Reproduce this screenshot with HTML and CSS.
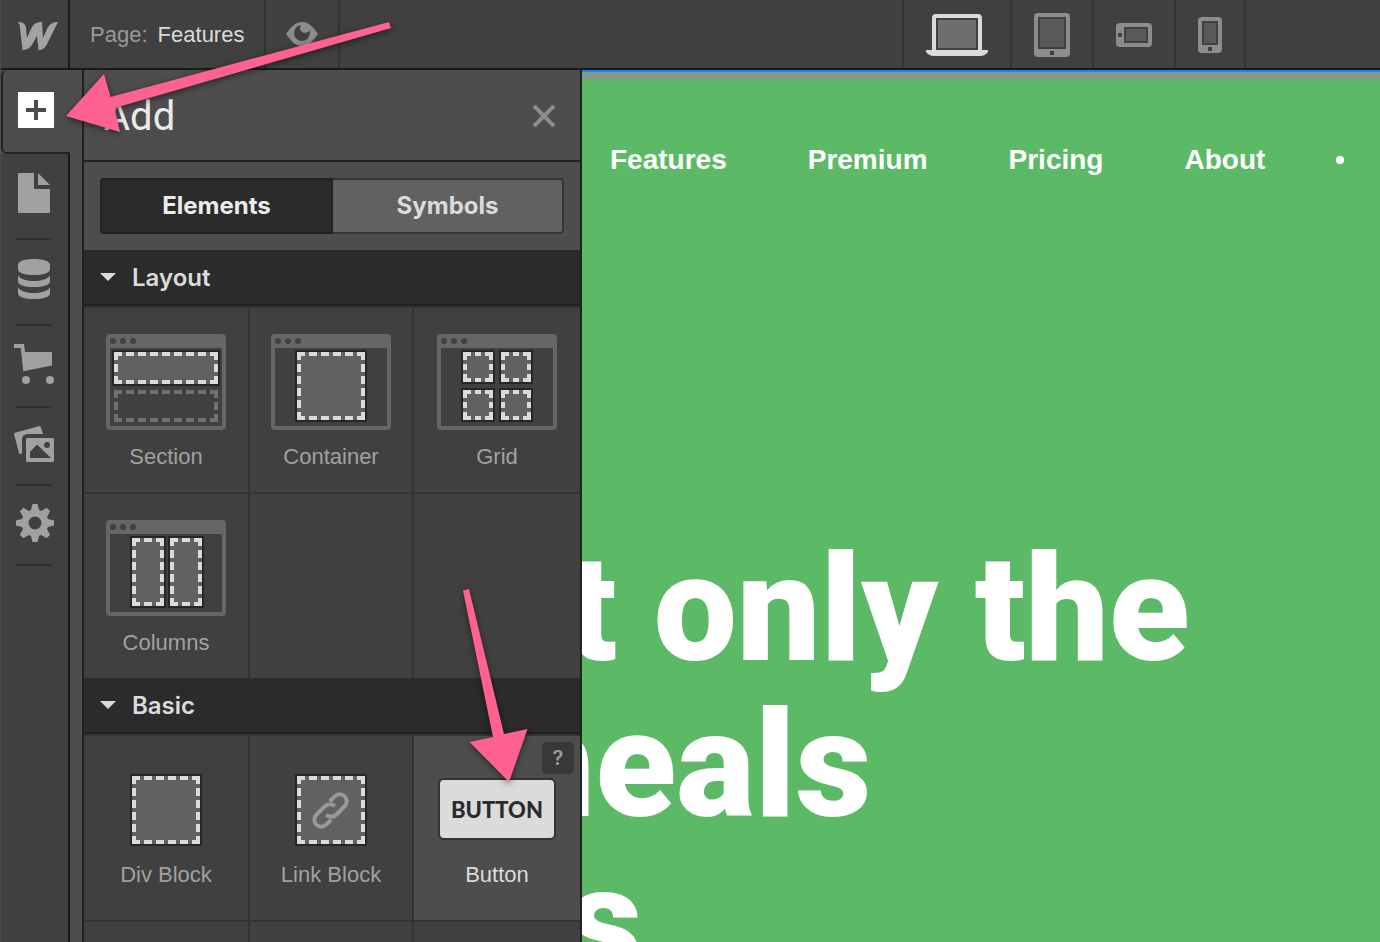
FILE: index.html
```html
<!DOCTYPE html>
<html lang="en">
<head>
    <meta charset="UTF-8">
    <meta name="viewport" content="width=device-width, initial-scale=1.0">
    <title>Designer - Features</title>
    <link rel="stylesheet" href="styles.css">
</head>
<body>
    <div class="app">
        <header class="topbar">
            <a class="logo" href="#" aria-label="Dashboard">
                <svg width="40" height="28" viewBox="0 0 40 28"><path fill="#a3a3a3" d="M0 0C5 0 7.500 2 8 6L9 16L13 7C15 2.500 18 0 24 0L25 16L28.500 8C31 2.500 34 0 40 0L30 20C27.500 25.500 25.500 28 20.500 28L19 14L15 21C12.500 26 9 28 4.500 28L2 6C1.800 3 1.500 1.500 0 0Z"/></svg>
            </a>
            <button class="page-switch" type="button"><span class="page-label">Page:</span> Features</button>
            <button class="preview" type="button" aria-label="Preview">
                <svg width="32" height="24" viewBox="0 0 32 24"><path fill="#8c8c8c" d="M0 12C5 5 9 0 16 0s11 5 16 12c-5 7-9 12-16 12S5 19 0 12z"/><circle cx="16" cy="11" r="8" fill="#404040"/><circle cx="19" cy="6" r="5" fill="#8c8c8c"/></svg>
            </button>
            <div class="devices">
                <button class="device device-desktop" type="button" aria-label="Desktop">
                    <svg width="62" height="42" viewBox="0 0 62 42"><path fill="#dbdbdb" d="M6 36V4q0-4 4-4h42q4 0 4 4v32h6v2q-3 4-8 4H8q-5 0-8-4v-2z"/><path fill="#404040" d="M10 4h42v32H10z"/><path fill="#6e6e6e" d="M12 6h38v28H12z"/></svg>
                </button>
                <button class="device" type="button" aria-label="Tablet">
                    <svg width="36" height="44" viewBox="0 0 36 44"><rect width="36" height="44" rx="4" fill="#8c8c8c"/><path fill="#404040" d="M4 4h28v32H4zM16 38h4v4h-4z"/><path fill="#595959" d="M6 6h24v28H6z"/></svg>
                </button>
                <button class="device" type="button" aria-label="Phone landscape">
                    <svg width="36" height="24" viewBox="0 0 36 24"><rect width="36" height="24" rx="4" fill="#8c8c8c"/><path fill="#404040" d="M8 4h24v16H8zM2 10h4v4H2z"/><path fill="#595959" d="M10 6h20v12H10z"/></svg>
                </button>
                <button class="device device-phone" type="button" aria-label="Phone portrait">
                    <svg width="24" height="36" viewBox="0 0 24 36"><rect width="24" height="36" rx="4" fill="#8c8c8c"/><path fill="#404040" d="M4 4h16v24H4zM10 30h4v4h-4z"/><path fill="#595959" d="M6 6h12v20H6z"/></svg>
                </button>
            </div>
        </header>

        <main class="workspace">
            <nav class="rail">
                <button class="rail-active" type="button" aria-label="Add">
                    <svg width="36" height="36" viewBox="0 0 36 36"><rect width="36" height="36" rx="1" fill="#fff"/><path fill="#4d4d4d" d="M16 8h4v8h8v4h-8v8h-4v-8H8v-4h8z"/></svg>
                </button>
                <div class="rail-list">
                    <button class="rail-item rail-item-tall" type="button" aria-label="Pages">
                        <svg width="40" height="40" viewBox="0 0 40 40"><path d="M5 0h15v16h16v23q0 1-1 1H5q-1 0-1-1V1q0-1 1-1zM24 0l12 12H24z"/></svg>
                    </button>
                    <hr>
                    <button class="rail-item rail-item-tall" type="button" aria-label="Collections">
                        <svg width="40" height="40" viewBox="0 0 40 40"><path d="M4 6c0-4 7-6 16-6s16 2 16 6v4c0 4-7 6-16 6S4 14 4 10zM4 16.500c3 4 9 5.500 16 5.500s13-1.500 16-5.500V22c0 4-7 6-16 6S4 26 4 22zM4 28.500c3 4 9 5.500 16 5.500s13-1.500 16-5.500V34c0 4-7 6-16 6S4 38 4 34z"/></svg>
                    </button>
                    <hr>
                    <button class="rail-item" type="button" aria-label="Ecommerce">
                        <svg width="40" height="40" viewBox="0 0 40 40"><path d="M0 0h10l1 8h27v13.600L9.300 27.300 6.700 4H0z"/><circle cx="12" cy="36" r="4"/><circle cx="36" cy="36" r="4"/></svg>
                    </button>
                    <hr>
                    <button class="rail-item" type="button" aria-label="Assets">
                        <svg width="40" height="36" viewBox="0 0 40 36"><path d="M0 8q0-1 1-1.300L25.500 0q1 0 1.300 1L29 8H14q-6 0-6 6v13l-1.500 1q-1 0-1.500-1z"/><path fill-rule="evenodd" d="M13.500 12h25q1.500 0 1.500 1.500v21q0 1.500-1.500 1.500h-25q-1.500 0-1.500-1.500v-21q0-1.500 1.500-1.500zM16 32h21L23 18.500 16 26zM33 16a3 3 0 1 0 0 6 3 3 0 0 0 0-6z"/></svg>
                    </button>
                    <hr>
                    <button class="rail-item" type="button" aria-label="Settings">
                        <svg width="40" height="38" viewBox="0 0 40 38">
                            <circle class="gear-ring" cx="21" cy="19" r="10"/>
                            <path id="tooth" d="M18.500 0h5l2 8h-9z"/>
                            <use href="#tooth" transform="rotate(45 21 19)"/>
                            <use href="#tooth" transform="rotate(90 21 19)"/>
                            <use href="#tooth" transform="rotate(135 21 19)"/>
                            <use href="#tooth" transform="rotate(180 21 19)"/>
                            <use href="#tooth" transform="rotate(225 21 19)"/>
                            <use href="#tooth" transform="rotate(270 21 19)"/>
                            <use href="#tooth" transform="rotate(315 21 19)"/>
                        </svg>
                    </button>
                    <hr>
                </div>
            </nav>

            <section class="panel">
                <div class="panel-header">
                    <h2>Add</h2>
                    <button class="close" type="button" aria-label="Close">
                        <svg width="24" height="24" viewBox="0 0 24 24"><path d="M2 2l20 20M22 2L2 22" stroke="#8c8c8c" stroke-width="4"/></svg>
                    </button>
                </div>
                <div class="tabs">
                    <button class="tab tab-active" type="button">Elements</button>
                    <button class="tab" type="button">Symbols</button>
                </div>

                <button class="group-title" type="button">
                    <svg width="16" height="8" viewBox="0 0 16 8"><path fill="#dbdbdb" d="M0 0h16L8 8z"/></svg>
                    Layout
                </button>
                <div class="tiles">
                    <button class="tile" type="button">
                        <svg width="120" height="96" viewBox="0 0 120 96">
                            <g id="frame">
                                <rect width="120" height="96" rx="4" fill="#666"/>
                                <path fill="#404040" d="M4 14h112v78H4z"/>
                                <circle cx="7" cy="7" r="3" fill="#404040"/><circle cx="17" cy="7" r="3" fill="#404040"/><circle cx="27" cy="7" r="3" fill="#404040"/>
                            </g>
                            <path class="box" d="M7 17h106v34H7z"/>
                            <path class="dash" d="M8 20h104M8 48h104M10 18v32M110 18v32"/>
                            <path class="dash dash-dim" d="M8 58h104M8 86h104M10 56v32M110 56v32"/>
                        </svg>
                        <span>Section</span>
                    </button>
                    <button class="tile" type="button">
                        <svg width="120" height="96" viewBox="0 0 120 96">
                            <use href="#frame"/>
                            <path class="box" d="M25 17h70v70H25z"/>
                            <path class="dash" d="M26 20h68M26 84h68M28 18v68M92 18v68"/>
                        </svg>
                        <span>Container</span>
                    </button>
                    <button class="tile" type="button">
                        <svg width="120" height="96" viewBox="0 0 120 96">
                            <use href="#frame"/>
                            <g id="cell">
                                <path class="box" d="M25 17h32v32H25z"/>
                                <path class="dash dash-cell" d="M26 20h30M26 46h30M28 18v30M54 18v30"/>
                            </g>
                            <use href="#cell" x="38"/>
                            <use href="#cell" y="38"/>
                            <use href="#cell" x="38" y="38"/>
                        </svg>
                        <span>Grid</span>
                    </button>
                    <button class="tile" type="button">
                        <svg width="120" height="96" viewBox="0 0 120 96">
                            <use href="#frame"/>
                            <g id="column">
                                <path class="box" d="M25 17h34v70H25z"/>
                                <path class="dash" d="M26 20h32M26 84h32M28 18v68M56 18v68"/>
                            </g>
                            <use href="#column" x="38"/>
                        </svg>
                        <span>Columns</span>
                    </button>
                    <div class="tile"></div>
                    <div class="tile"></div>
                </div>

                <button class="group-title" type="button">
                    <svg width="16" height="8" viewBox="0 0 16 8"><path fill="#dbdbdb" d="M0 0h16L8 8z"/></svg>
                    Basic
                </button>
                <div class="tiles tiles-basic">
                    <button class="tile" type="button">
                        <svg width="72" height="72" viewBox="0 0 72 72">
                            <g id="block">
                                <path class="box" d="M1 1h70v70H1z"/>
                                <path class="dash" d="M2 4h68M2 68h68M4 2v68M68 2v68"/>
                            </g>
                        </svg>
                        <span>Div Block</span>
                    </button>
                    <button class="tile" type="button">
                        <svg width="72" height="72" viewBox="0 0 72 72">
                            <use href="#block"/>
                            <g transform="translate(35.500 36.500) rotate(-45)" fill="none" stroke="#999" stroke-width="4">
                                <path id="link" d="M6 -7h7a7 7 0 0 1 0 14H1A7 7 0 0 1 -6 0"/>
                                <use href="#link" transform="rotate(180)"/>
                            </g>
                        </svg>
                        <span>Link Block</span>
                    </button>
                    <div class="tile tile-hover">
                        <button class="help" type="button" aria-label="Help">?</button>
                        <button class="button-art" type="button">BUTTON</button>
                        <span>Button</span>
                    </div>
                    <div class="tile"></div>
                    <div class="tile"></div>
                    <div class="tile"></div>
                </div>
            </section>

            <section class="canvas">
                <nav class="site-nav">
                    <a href="#">Features</a>
                    <a href="#">Premium</a>
                    <a href="#">Pricing</a>
                    <a href="#">About</a>
                    <span class="dot"></span>
                </nav>
                <h1 class="hero">
                    <span>t only the</span>
                    <span class="hero-cut">meals</span>
                    <span>s</span>
                </h1>
            </section>
        </main>

        <svg class="arrows" width="540" height="800" viewBox="0 0 540 800">
            <path d="M66 116L104 74L110.500 97L389 22L391 28L114.500 108L120 132Z"/>
            <path d="M463 590.500L469 589L504 734L527.500 729L509 782L469.500 742L493 737Z"/>
        </svg>
    </div>
</body>
</html>
```
FILE: styles.css
```css
* {
    box-sizing: border-box;
}
body {
    margin: 0;
    overflow: hidden;
    background-color: #404040;
    font-family: "Liberation Sans", Arial, sans-serif;
    font-size: 22px;
    color: #dbdbdb;
}
button {
    margin: 0;
    padding: 0;
    border: 0;
    background: none;
    color: inherit;
    font: inherit;
    cursor: pointer;
}
svg {
    display: block;
    flex-shrink: 0;
}
.app {
    position: relative;
    display: flex;
    flex-direction: column;
    height: 100vh;
    border-left: 1px solid #4d4d4d;
}

/* top bar */
.topbar {
    display: flex;
    flex-shrink: 0;
    height: 70px;
    border-bottom: 2px solid #1a1a1a;
    background-color: #404040;
}
.logo {
    display: flex;
    align-items: center;
    width: 69px;
    padding: 4px 0 0 17px;
    border-right: 2px solid #1a1a1a;
}
.page-switch {
    padding: 2px 20px 0;
    border-right: 2px solid #333;
}
.page-label {
    margin-right: 4px;
    color: #999;
}
.preview {
    display: flex;
    align-items: center;
    justify-content: center;
    width: 74px;
    border-right: 2px solid #333;
}
.devices {
    display: flex;
    margin-left: auto;
    padding-right: 134px;
}
.device {
    display: flex;
    align-items: center;
    justify-content: center;
    width: 82px;
    padding-top: 2px;
    border-left: 2px solid #333;
}
.device-desktop {
    width: 108px;
}
.device-phone {
    width: 72px;
    border-right: 2px solid #333;
}

/* left rail */
.workspace {
    display: flex;
    flex: 1;
    min-height: 0;
}
.rail {
    display: flex;
    flex-direction: column;
    flex-shrink: 0;
    width: 81px;
    background-color: #4d4d4d;
}
.rail-active {
    height: 84px;
    width: 69px;
    padding: 22px 0 0 15px;
    border-left: 2px solid #222;
    border-bottom: 2px solid #222;
    border-radius: 6px 0 0 6px;
    background-color: #4d4d4d;
    display: flex;
}
.rail-list {
    flex: 1;
    width: 69px;
    border-right: 2px solid #1a1a1a;
    background-color: #404040;
}
.rail-item {
    display: block;
    width: 100%;
    padding: 18px 0 22px 13px;
    fill: #a1a1a1;
}
.rail-item-tall {
    padding-top: 19px;
    padding-bottom: 25px;
}
.gear-ring {
    fill: none;
    stroke: #a1a1a1;
    stroke-width: 7;
}
.rail hr {
    height: 2px;
    margin: 0 16px 0 15px;
    border: 0;
    background-color: #303030;
}

/* add panel */
.panel {
    display: flex;
    flex-direction: column;
    flex-shrink: 0;
    width: 500px;
    overflow: hidden;
    border-left: 2px solid #222;
    border-right: 2px solid #222;
    background-color: #4d4d4d;
}
.panel-header {
    display: flex;
    flex-shrink: 0;
    align-items: center;
    justify-content: space-between;
    height: 92px;
    padding: 2px 24px 0 20px;
    border-bottom: 2px solid #222;
}
.panel-header h2 {
    margin: 0;
    font-family: Roboto, sans-serif;
    font-size: 40px;
    font-weight: 400;
    color: #ebebeb;
}
.tabs {
    display: flex;
    flex-shrink: 0;
    height: 88px;
    padding: 16px;
    font-family: Inter, sans-serif;
    font-size: 24px;
    font-weight: 700;
}
.tab {
    flex: 1;
    padding-bottom: 2px;
    border: 2px solid #363636;
    border-left: 0;
    border-radius: 0 4px 4px 0;
    background-color: #616161;
}
.tab-active {
    border: 2px solid #222;
    border-radius: 4px 0 0 4px;
    background-color: #2b2b2b;
    color: #ebebeb;
}
.group-title {
    display: flex;
    flex-shrink: 0;
    align-items: center;
    gap: 16px;
    height: 56px;
    padding: 0 16px;
    border-bottom: 2px solid #222;
    background-color: #2b2b2b;
    font-family: Inter, sans-serif;
    font-size: 24px;
    font-weight: 600;
}
.tiles {
    display: grid;
    flex-shrink: 0;
    grid-template-columns: 164px 162px 1fr;
    grid-auto-rows: 184px;
    gap: 2px;
    padding-top: 2px;
    background-color: #333;
}
.tile {
    position: relative;
    display: flex;
    flex-direction: column;
    align-items: center;
    gap: 14px;
    padding-top: 26px;
    background-color: #404040;
    line-height: 26px;
    color: #a1a1a1;
}
.tiles-basic .tile {
    gap: 16px;
    padding-top: 38px;
}
.tiles .tile-hover {
    background-color: #4d4d4d;
    color: #dbdbdb;
}
.box {
    fill: #616161;
    stroke: #262626;
    stroke-width: 2;
}
.dash {
    fill: none;
    stroke: #dbdbdb;
    stroke-width: 4;
    stroke-dasharray: 8 4;
}
.dash-dim {
    stroke: #707070;
}
.dash-cell {
    stroke-dasharray: 8 4 6 4 8;
}
.button-art {
    width: 118px;
    height: 62px;
    margin: 4px 0 6px;
    padding-top: 2px;
    border: 2px solid #333;
    border-radius: 6px;
    background-color: #dbdbdb;
    font-family: Lato, sans-serif;
    font-size: 22px;
    font-weight: 900;
    color: #2b2b2b;
}
.help {
    position: absolute;
    top: 6px;
    right: 6px;
    width: 32px;
    height: 32px;
    border-radius: 5px;
    background-color: #383838;
    font-family: Inter, sans-serif;
    font-size: 20px;
    font-weight: 600;
    color: #999;
}

/* site being edited */
.canvas {
    flex: 1;
    min-width: 0;
    overflow: hidden;
    border-top: 2px solid #1a85ff;
    background-color: #5cba67;
    color: #fff;
}
.site-nav {
    display: flex;
    align-items: center;
    gap: 81px;
    padding: 70px 28px 0;
    border-top: 8px solid #7f9b8c;
    font-size: 28px;
    font-weight: 700;
    line-height: 20px;
}
.site-nav a {
    color: #fff;
    text-decoration: none;
}
.dot {
    width: 8px;
    height: 8px;
    margin-left: -10px;
    border-radius: 50%;
    background-color: #fff;
}
.hero {
    margin: 362px 0 0 -16px;
    font-family: Roboto, sans-serif;
    font-size: 148px;
    font-weight: 900;
    line-height: 156px;
    white-space: nowrap;
}
.hero span {
    display: block;
}
.hero .hero-cut {
    margin-left: -98px;
}

/* pointers drawn over the whole editor */
.arrows {
    position: absolute;
    top: 0;
    left: -1px;
    fill: #ff6191;
    filter: drop-shadow(0 2px 3px rgba(0, 0, 0, 0.5));
    pointer-events: none;
}
```
